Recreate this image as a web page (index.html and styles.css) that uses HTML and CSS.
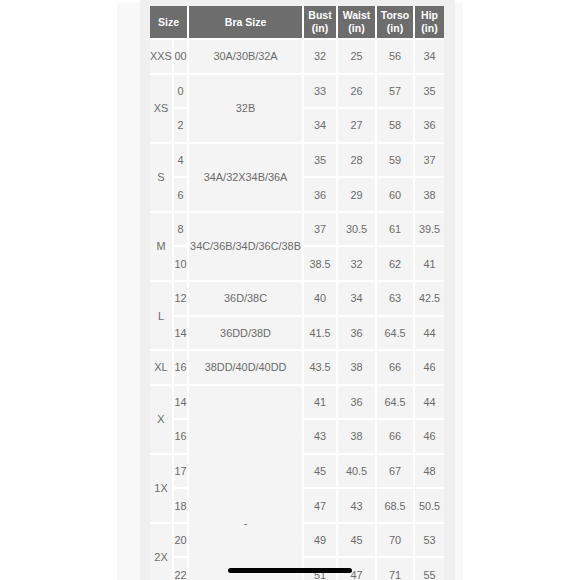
FILE: index.html
```html
<!DOCTYPE html>
<html>
<head>
<meta charset="utf-8">
<link rel="stylesheet" href="styles.css">
</head>
<body>
<div class="panel">
  <div class="inner">
    <table class="chart">
      <colgroup>
        <col class="c-size"><col class="c-num"><col class="c-bra"><col class="c-bust"><col class="c-waist"><col class="c-torso"><col class="c-hip">
      </colgroup>
      <thead>
        <tr>
          <th colspan="2">Size</th>
          <th>Bra Size</th>
          <th>Bust<br>(in)</th>
          <th>Waist<br>(in)</th>
          <th>Torso<br>(in)</th>
          <th>Hip<br>(in)</th>
        </tr>
      </thead>
      <tbody>
        <tr><td>XXS</td><td>00</td><td>30A/30B/32A</td><td>32</td><td>25</td><td>56</td><td>34</td></tr>
        <tr><td rowspan="2">XS</td><td>0</td><td rowspan="2">32B</td><td>33</td><td>26</td><td>57</td><td>35</td></tr>
        <tr><td>2</td><td>34</td><td>27</td><td>58</td><td>36</td></tr>
        <tr><td rowspan="2">S</td><td>4</td><td rowspan="2">34A/32X34B/36A</td><td>35</td><td>28</td><td>59</td><td>37</td></tr>
        <tr><td>6</td><td>36</td><td>29</td><td>60</td><td>38</td></tr>
        <tr><td rowspan="2">M</td><td>8</td><td rowspan="2">34C/36B/34D/36C/38B</td><td>37</td><td>30.5</td><td>61</td><td>39.5</td></tr>
        <tr><td>10</td><td>38.5</td><td>32</td><td>62</td><td>41</td></tr>
        <tr><td rowspan="2">L</td><td>12</td><td>36D/38C</td><td>40</td><td>34</td><td>63</td><td>42.5</td></tr>
        <tr><td>14</td><td>36DD/38D</td><td>41.5</td><td>36</td><td>64.5</td><td>44</td></tr>
        <tr><td>XL</td><td>16</td><td>38DD/40D/40DD</td><td>43.5</td><td>38</td><td>66</td><td>46</td></tr>
        <tr><td rowspan="2">X</td><td>14</td><td rowspan="8">-</td><td>41</td><td>36</td><td>64.5</td><td>44</td></tr>
        <tr><td>16</td><td>43</td><td>38</td><td>66</td><td>46</td></tr>
        <tr><td rowspan="2">1X</td><td>17</td><td>45</td><td>40.5</td><td>67</td><td>48</td></tr>
        <tr><td>18</td><td>47</td><td>43</td><td>68.5</td><td>50.5</td></tr>
        <tr><td rowspan="2">2X</td><td>20</td><td>49</td><td>45</td><td>70</td><td>53</td></tr>
        <tr><td>22</td><td>51</td><td>47</td><td>71</td><td>55</td></tr>
        <tr><td rowspan="2">3X</td><td>24</td><td>53</td><td>49</td><td>72</td><td>57.5</td></tr>
        <tr><td>26</td><td>55</td><td>51</td><td>73</td><td>60</td></tr>
      </tbody>
    </table>
  </div>
</div>
<div class="home-bar"></div>
</body>
</html>
```
FILE: styles.css
```css
html, body {
  margin: 0;
  padding: 0;
  background: #ffffff;
  height: 100%;
  overflow: hidden;
}

body {
  font-family: "Liberation Sans", Arial, sans-serif;
}

.panel {
  width: 346px;
  margin-left: 117px;
  box-sizing: border-box;
  padding: 0 8px 0 23px;
  background: #f8f8f8;
  min-height: 100%;
  box-shadow: inset 0 5px 2px -2px #ffffff;
}

.inner {
  background: #efefef;
  padding: 6px 11px 0 10px;
  min-height: 700px;
}

.chart {
  width: 294px;
  table-layout: fixed;
  border-collapse: collapse;
  border-style: hidden;
}

.c-size { width: 23px; }
.c-num { width: 15px; }
.c-bra { width: 115px; }
.c-bust { width: 34px; }
.c-waist { width: 39px; }
.c-torso { width: 38px; }
.c-hip { width: 30px; }

.chart th {
  background: #6d6d6d;
  color: #ffffff;
  font-weight: bold;
  font-size: 10.5px;
  line-height: 13px;
  height: 32px;
  padding: 0;
  text-align: center;
  vertical-align: middle;
  border: 2px solid #ffffff;
  white-space: nowrap;
}

.chart td {
  background: #f4f4f4;
  color: #6b6b6b;
  font-size: 10.9px;
  height: 32.57px;
  padding: 0;
  text-align: center;
  vertical-align: middle;
  border: 2px solid #ffffff;
  white-space: nowrap;
}

.home-bar {
  position: fixed;
  left: 228px;
  top: 568px;
  width: 124px;
  height: 5px;
  border-radius: 3px;
  background: #000000;
}
```
